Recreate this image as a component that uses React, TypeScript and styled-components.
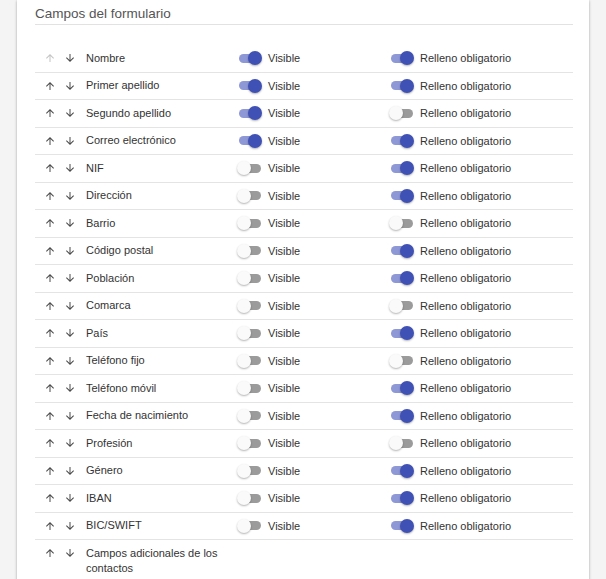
import React from "react";
import styled, { createGlobalStyle } from "styled-components";

const Global = createGlobalStyle`
  html, body { margin: 0; padding: 0; background: #f4f4f4; }
  body { font-family: "Liberation Sans", Arial, sans-serif; overflow: hidden; }
`;

const Page = styled.div`
  padding: 0 17px;
`;

const Card = styled.div`
  background: #fff;
  box-shadow: 0 1px 3px rgba(0,0,0,0.22), 0 0 2px rgba(0,0,0,0.12);
  padding: 5px 16px 40px 18px;
`;

const Title = styled.div`
  font-size: 13.5px;
  color: #555;
  line-height: 18px;
  padding-bottom: 1px;
  border-bottom: 1px solid #e2e2e2;
`;

const List = styled.div`
  margin-top: 20px;
`;

const Row = styled.div`
  display: grid;
  grid-template-columns: 51px 151px 152px 1fr;
  align-items: start;
  border-bottom: 1px solid #e4e4e4;
`;

const Arrows = styled.div`
  display: flex;
  align-items: center;
  height: 26.5px;
  gap: 8px;
  padding-left: 9px;
`;

const ArrowIcon = styled.svg<{ $disabled?: boolean }>`
  width: 12px;
  height: 12px;
  fill: ${(p) => (p.$disabled ? "#c4c4c4" : "#4a4a4a")};
  display: block;
`;

const Label = styled.div`
  font-size: 11px;
  color: #333;
  line-height: 15px;
  padding: 5.75px 10px 5.75px 0;
`;

const ToggleCell = styled.div`
  display: flex;
  align-items: center;
  height: 26.5px;
  gap: 6px;
  font-size: 11px;
  color: #333;
`;

const Track = styled.span`
  position: relative;
  display: inline-block;
  width: 25px;
  height: 14px;
`;

const Bar = styled.span<{ $on: boolean }>`
  position: absolute;
  left: 2px;
  top: 2.5px;
  width: 22px;
  height: 9px;
  border-radius: 5px;
  background: ${(p) => (p.$on ? "#8e98d6" : "#9b9b9b")};
`;

const Knob = styled.span<{ $on: boolean }>`
  position: absolute;
  top: 0;
  left: ${(p) => (p.$on ? "11px" : "0")};
  width: 14px;
  height: 14px;
  border-radius: 50%;
  background: ${(p) => (p.$on ? "#3f51b5" : "#fafafa")};
  box-shadow: 0 1px 2px rgba(0,0,0,0.3);
`;

const Up = ({ disabled }: { disabled?: boolean }) => (
  <ArrowIcon viewBox="0 0 24 24" $disabled={disabled}>
    <path d="M4 12l1.41 1.41L11 7.83V20h2V7.83l5.58 5.59L20 12l-8-8-8 8z" />
  </ArrowIcon>
);
const Down = () => (
  <ArrowIcon viewBox="0 0 24 24">
    <path d="M20 12l-1.41-1.41L13 16.17V4h-2v12.17l-5.58-5.59L4 12l8 8 8-8z" />
  </ArrowIcon>
);

const Toggle = ({ on, label }: { on: boolean; label: string }) => (
  <ToggleCell>
    <Track>
      <Bar $on={on} />
      <Knob $on={on} />
    </Track>
    {label}
  </ToggleCell>
);

type F = { name: string; v?: boolean; r?: boolean; extra?: boolean };

const fields: F[] = [
  { name: "Nombre", v: true, r: true },
  { name: "Primer apellido", v: true, r: true },
  { name: "Segundo apellido", v: true, r: false },
  { name: "Correo electrónico", v: true, r: true },
  { name: "NIF", v: false, r: true },
  { name: "Dirección", v: false, r: true },
  { name: "Barrio", v: false, r: false },
  { name: "Código postal", v: false, r: true },
  { name: "Población", v: false, r: true },
  { name: "Comarca", v: false, r: false },
  { name: "País", v: false, r: true },
  { name: "Teléfono fijo", v: false, r: false },
  { name: "Teléfono móvil", v: false, r: true },
  { name: "Fecha de nacimiento", v: false, r: true },
  { name: "Profesión", v: false, r: false },
  { name: "Género", v: false, r: true },
  { name: "IBAN", v: false, r: true },
  { name: "BIC/SWIFT", v: false, r: true },
  { name: "Campos adicionales de los contactos", extra: true },
];

export default function App() {
  return (
    <>
      <Global />
      <Page>
        <Card>
          <Title>Campos del formulario</Title>
          <List>
            {fields.map((f, i) => (
              <Row key={f.name}>
                <Arrows>
                  <Up disabled={i === 0} />
                  <Down />
                </Arrows>
                <Label>{f.name}</Label>
                {f.extra ? null : (
                  <>
                    <Toggle on={!!f.v} label="Visible" />
                    <Toggle on={!!f.r} label="Relleno obligatorio" />
                  </>
                )}
              </Row>
            ))}
          </List>
        </Card>
      </Page>
    </>
  );
}
